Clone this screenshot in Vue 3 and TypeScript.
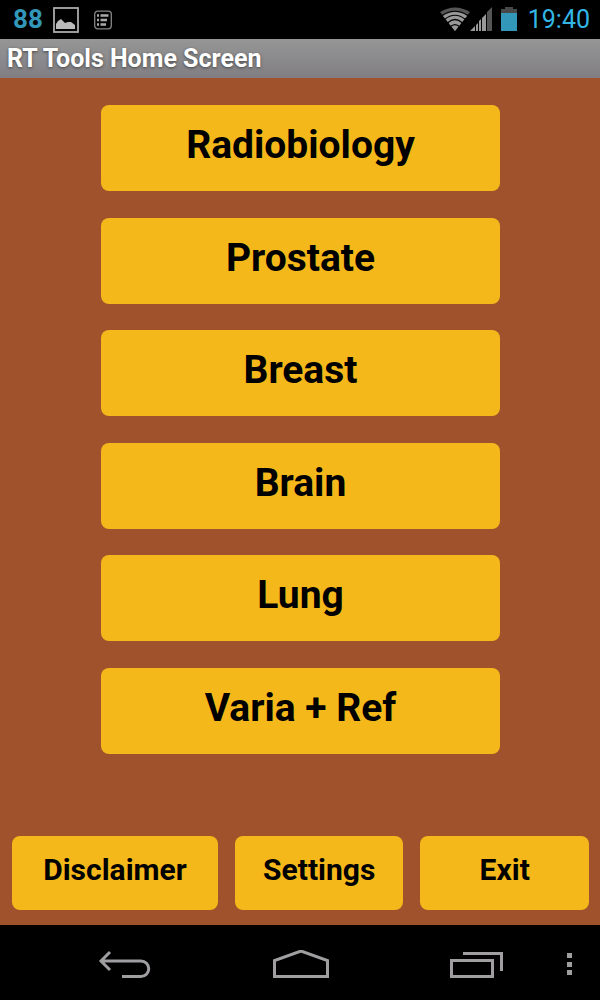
<script setup lang="ts">
const tools: string[] = ['Radiobiology', 'Prostate', 'Breast', 'Brain', 'Lung', 'Varia + Ref']
const actions: string[] = ['Disclaimer', 'Settings', 'Exit']
</script>

<template>
  <div class="screen">
    <header class="status">
      <div class="notices">
        <span class="level">88</span>
        <svg class="picture" width="26" height="26" viewBox="0 0 26 26" aria-hidden="true">
          <rect x="1" y="1" width="24" height="24" fill="none" stroke="#aaa" stroke-width="1.8" />
          <path d="M3 22V17L5 14L8 12L12 16L15 15L18 15L22 18V22Z" fill="#bbb" />
        </svg>
        <svg class="list" width="20" height="20" viewBox="0 0 20 20" aria-hidden="true">
          <rect x="1.7" y="1.2" width="16.6" height="17.6" rx="3" fill="none" stroke="#858585" stroke-width="1.3" />
          <path d="M4 5.500H6M4 10H6M4 14.500H6M7.500 5.500H15.500M7.500 10H14M7.500 14.500H13" stroke="#aaa" stroke-width="2.6" />
        </svg>
      </div>
      <div class="indicators">
        <svg width="30" height="25" viewBox="1 0 30 25" aria-hidden="true">
          <path d="M16 24L1 5Q16 -4 31 5Z" fill="#555" />
          <path d="M16 24L4 9Q16 1 28 9Z" fill="#999" />
          <path d="M3 8.500Q16 0 29 8.500M5.500 12.500Q16 4 26.500 12.500M8.500 16Q16 9 23.500 16M11 20Q16 15 21 20" fill="none" stroke="#000" stroke-width="1.2" />
        </svg>
        <svg width="22" height="25" viewBox="0 0 22 25" aria-hidden="true">
          <path d="M17 24V5L22 0V24Z" fill="#555" />
          <path d="M0 24L5 19V24ZM6 24V18L8 16V24ZM9 24V14L11 12V24ZM12 24V11L16 7V24Z" fill="#999" />
        </svg>
        <svg class="battery" width="16" height="25" viewBox="0 0 16 25" aria-hidden="true">
          <path d="M0 6V2H4V0H12V2H16V6Z" fill="#484848" />
          <path d="M0 6H16V24H0Z" fill="#3297b9" />
        </svg>
        <time class="clock">19:40</time>
      </div>
    </header>

    <h1 class="title">RT Tools Home Screen</h1>

    <main class="body">
      <nav class="menu">
        <button v-for="tool in tools" :key="tool" type="button" class="key tool">{{ tool }}</button>
      </nav>
      <div class="actions">
        <button v-for="action in actions" :key="action" type="button" class="key action">{{ action }}</button>
      </div>
    </main>

    <footer class="system">
      <button type="button" class="nav-key" aria-label="Back">
        <svg width="54" height="30" viewBox="0 0 54 30">
          <path d="M3 11H43A7.750 7.750 0 0 1 43 26.500H24M12 2L3 11L12 20" fill="none" stroke="#a09ea1" stroke-width="3" />
        </svg>
      </button>
      <button type="button" class="nav-key" aria-label="Home">
        <svg width="58" height="30" viewBox="0 0 58 30">
          <path d="M2.500 26.500V10.500L29 1L55.500 10.500V26.500Z" fill="none" stroke="#a09ea1" stroke-width="3" />
        </svg>
      </button>
      <button type="button" class="nav-key" aria-label="Recent apps">
        <svg width="54" height="30" viewBox="0 0 54 30">
          <path d="M1.500 10.500H42.500V26.500H1.500ZM13 3.500H51.500V21" fill="none" stroke="#a09ea1" stroke-width="3" />
        </svg>
      </button>
      <button type="button" class="nav-key" aria-label="More options">
        <svg width="6" height="26" viewBox="0 0 6 26">
          <path d="M0 1H5V6H0ZM0 10H5V15H0ZM0 18H5V23H0Z" fill="#a09ea1" />
        </svg>
      </button>
    </footer>
  </div>
</template>

<style>
body {
  margin: 0;
  background: #000;
}
</style>

<style scoped>
.screen {
  display: flex;
  flex-direction: column;
  min-height: 100vh;
  font-family: Roboto, "Liberation Sans", sans-serif;
}

.status {
  display: flex;
  justify-content: space-between;
  align-items: center;
  box-sizing: border-box;
  height: 39px;
  padding: 0 10px 0 13px;
  background: #000;
}

.notices,
.indicators {
  display: flex;
  align-items: center;
}

.level {
  color: #3297b9;
  font-size: 26px;
  font-weight: 700;
  line-height: 39px;
}

.picture {
  margin-left: 10px;
}

.list {
  margin-left: 14px;
}

.battery {
  margin-left: 9px;
}

.clock {
  margin-left: 11px;
  color: #33b5e5;
  font-size: 25px;
  line-height: 39px;
}

.title {
  margin: 0;
  padding: 0 7px;
  background: linear-gradient(#969696, #807e82);
  color: #fff;
  font-size: 25px;
  font-weight: 700;
  line-height: 39px;
  text-shadow: 0 1px 3px #444;
}

.body {
  display: flex;
  flex: 1;
  flex-direction: column;
  gap: 82px;
  padding: 27px 11px 15px 12px;
  background: #a0522d;
}

.menu {
  display: flex;
  flex: 1;
  flex-direction: column;
  justify-content: space-between;
  align-items: center;
}

.key {
  border: 0;
  border-radius: 8px;
  background: #f5b81a;
  color: #000;
  font-family: inherit;
  font-weight: 700;
}

.tool {
  width: 69%;
  height: 86px;
  padding: 0 0 6px;
  font-size: 39px;
}

.actions {
  display: grid;
  grid-template-columns: 11fr 9fr 9fr;
  gap: 17px;
}

.action {
  height: 74px;
  padding: 0 0 8px;
  font-size: 30px;
}

.system {
  display: grid;
  grid-template-columns: 1fr 1fr 1fr 9px;
  align-items: center;
  box-sizing: border-box;
  height: 75px;
  padding: 0 26px 0 37px;
  background: #000;
}

.nav-key {
  display: flex;
  justify-content: center;
  padding: 4px 0 0;
  border: 0;
  background: none;
}
</style>
